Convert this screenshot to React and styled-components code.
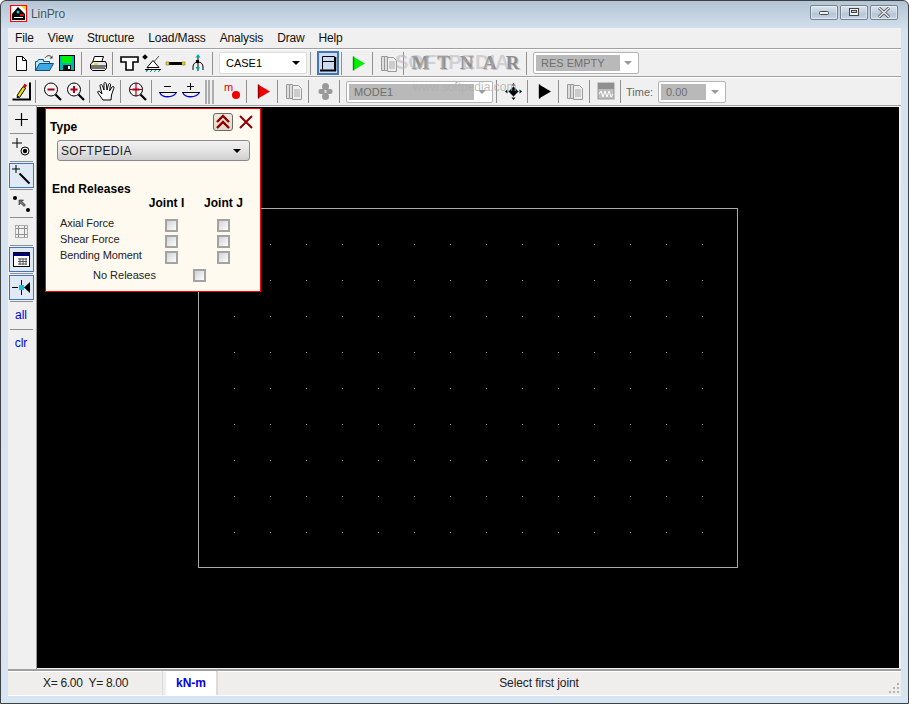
import React from 'react';
import styled, { createGlobalStyle } from 'styled-components';

const Global = createGlobalStyle`
  html, body { margin: 0; padding: 0; background: #fff; }
  body { font-family: "Liberation Sans", Arial, sans-serif; font-size: 12px; color: #000; }
  * { box-sizing: border-box; }
`;

const Window = styled.div`
  position: relative;
  width: 909px;
  height: 704px;
  display: flex;
  flex-direction: column;
  padding: 0 7px 7px;
  border: 1px solid #3d4247;
  border-radius: 6px 6px 0 0;
  background: linear-gradient(180deg, #b3c4d4 0, #d5e2ef 30px, #d7e5f2 100%);
`;

const TitleBar = styled.div`
  height: 27px;
  flex: none;
  display: flex;
  align-items: center;
  padding: 0 2px 2px 2px;
`;

const Title = styled.span`
  margin-left: 4px;
  font-size: 12px;
  letter-spacing: -0.1px;
  color: #4a545e;
  text-shadow: 0 0 4px #e8f0f8;
`;

const Controls = styled.div`
  margin-left: auto;
  margin-right: 1px;
  margin-bottom: 3px;
  display: flex;
  gap: 2px;
`;

const WinButton = styled.div`
  width: 28px;
  height: 15px;
  border: 1px solid #75838f;
  border-radius: 2px;
  display: flex;
  align-items: center;
  justify-content: center;
  background: linear-gradient(180deg, #d8e2ec 0, #c2d0de 50%, #b3c4d4 52%, #c6d5e4 100%);
  box-shadow: inset 0 0 0 1px rgba(255, 255, 255, 0.45);
`;

const Client = styled.div`
  flex: 1;
  min-height: 0;
  display: flex;
  flex-direction: column;
  background: #f0f0f0;
`;

const MenuBar = styled.div`
  height: 21px;
  flex: none;
  display: flex;
  align-items: center;
  gap: 14px;
  padding-left: 7px;
  border-bottom: 1px solid #a0a0a0;
`;

const MenuItem = styled.span`
  font-size: 12px;
  letter-spacing: -0.15px;
  color: #111;
`;

const ToolBar = styled.div`
  height: ${(p) => p.$h}px;
  flex: none;
  display: flex;
  align-items: center;
  padding-left: 2px;
  background: #f0f0f0;
  border-top: 1px solid #fff;
  border-bottom: 1px solid #a0a0a0;
`;

const Tool = styled.div`
  width: 23px;
  height: 24px;
  flex: none;
  display: flex;
  align-items: center;
  justify-content: center;
`;

const ActiveTool = styled.div`
  width: 22px;
  height: 24px;
  flex: none;
  margin-left: 1px;
  display: flex;
  align-items: center;
  justify-content: center;
  background: #cddcf0;
  border: 1px solid #3f76c4;
  box-shadow: inset 0 0 0 1px #3f76c4;
`;

const Sep = styled.div`
  width: 1px;
  height: 23px;
  flex: none;
  margin: 0 5px 0 2px;
  background: #8f8f8f;
`;

const Bar = styled.div`
  width: 2px;
  height: 24px;
  flex: none;
  margin-left: ${(p) => p.$left}px;
  margin-right: ${(p) => p.$right || 0}px;
  background: #adadad;
`;

const LetterTool = styled(Tool)`
  font-family: "Liberation Serif", serif;
  font-weight: 700;
  font-size: 19px;
  color: #8f8f8f;
  text-shadow: 1px 1px 0 #c4c4c4;
`;

const Combo = styled.div`
  width: ${(p) => p.$w}px;
  height: 22px;
  flex: none;
  margin-left: 1px;
  margin-right: 1px;
  display: flex;
  align-items: center;
  padding: 0 3px 0 2px;
  background: #fff;
  border: 1px solid ${(p) => (p.$off ? '#b4b4b4' : '#dcdcdc')};
  border-radius: 2px;
`;

const ComboText = styled.span`
  flex: ${(p) => (p.$w ? 'none' : 1)};
  width: ${(p) => (p.$w ? `${p.$w}px` : 'auto')};
  height: 16px;
  line-height: 16px;
  padding-left: ${(p) => (p.$off ? 5 : 4)}px;
  font-size: 11px;
  color: ${(p) => (p.$off ? '#6f6f6f' : '#000')};
  background: ${(p) => (p.$off ? '#b9b9b9' : 'transparent')};
`;

const Arrow = styled.i`
  width: 0;
  height: 0;
  margin-left: auto;
  margin-right: 3px;
  border-style: solid;
  border-width: 4px 4px 0;
  border-color: ${(p) => (p.$off ? '#9a9a9a' : '#000')} transparent transparent;
`;

const TimeLabel = styled.span`
  flex: none;
  width: 31px;
  font-size: 11px;
  color: #666;
`;

const Body = styled.div`
  flex: 1;
  min-height: 0;
  display: flex;
`;

const SideBar = styled.div`
  width: 29px;
  flex: none;
  display: flex;
  flex-direction: column;
  align-items: center;
  padding: 1px 2px 0 0;
  border-right: 1px solid #9a9a9a;
`;

const SideTool = styled.div`
  width: 25px;
  height: 25px;
  flex: none;
  display: flex;
  align-items: center;
  justify-content: center;
  border: 1px solid ${(p) => (p.$on ? '#3f76c4' : 'transparent')};
  ${(p) =>
    p.$on &&
    `background-color:#e0eaf7;
     background-image:radial-gradient(#b9cee9 0.6px, transparent 0.7px);
     background-size:2px 2px;`}
`;

const SideText = styled(SideTool)`
  padding-bottom: 2px;
  font-size: 12px;
  color: #0000e0;
`;

const SideSep = styled.div`
  width: 23px;
  height: 1px;
  flex: none;
  margin: 1px 0;
  background: #8f8f8f;
`;

const Canvas = styled.div`
  position: relative;
  flex: 1;
  min-width: 0;
  background: #000;
  margin: 1px 2px 1px 0;
`;

const Panel = styled.div`
  position: absolute;
  left: 8px;
  top: 1px;
  width: 216px;
  height: 184px;
  padding: 4px 0 0 4px;
  background: #fffaf0;
  border: 1px solid #f00;
`;

const PanelHead = styled.div`
  display: flex;
  align-items: center;
  height: 18px;
`;

const BoldLabel = styled.div`
  font-size: 12px;
  font-weight: 700;
  letter-spacing: 0.05px;
  line-height: 14px;
  margin-left: ${(p) => p.$left || 0}px;
  margin-top: ${(p) => p.$top || 0}px;
`;

const TypeLabel = styled(BoldLabel)`
  align-self: flex-end;
  margin-bottom: -3px;
`;

const Collapse = styled.div`
  width: 20px;
  height: 18px;
  margin-left: auto;
  display: flex;
  align-items: center;
  justify-content: center;
  background: linear-gradient(180deg, #f0e8dc, #e2d8c8);
  border: 1px solid #6a6a6a;
  border-radius: 3px;
`;

const CloseIcon = styled.div`
  width: 16px;
  height: 16px;
  margin: 0 6px 0 5px;
`;

const TypeSelect = styled.div`
  width: 193px;
  height: 21px;
  margin: 9px 0 0 7px;
  padding: 0 5px 0 3px;
  display: flex;
  align-items: center;
  font-size: 12px;
  letter-spacing: 0.3px;
  color: #222;
  border: 1px solid #8a8a8a;
  border-radius: 3px;
  background: linear-gradient(180deg, #f2f2f2 0, #e4e4e4 50%, #cfcfcf 100%);
`;

const JointHead = styled.div`
  display: grid;
  grid-template-columns: 57px 57px;
  justify-items: center;
  margin: 0 0 7px 88px;
  height: 14px;
`;

const ReleaseRow = styled.label`
  display: grid;
  grid-template-columns: 105px 13px 39px 13px;
  height: 16px;
  align-items: center;
  padding-left: 10px;
  font-size: 11px;
  letter-spacing: -0.1px;
  color: #222;
`;

const RowText = styled.span`
  margin-bottom: 5px;
`;

const NoRelease = styled.label`
  display: grid;
  grid-template-columns: 100px 13px;
  height: 16px;
  margin-top: 2px;
  align-items: center;
  padding-left: 43px;
  font-size: 11px;
  color: #222;
`;

const Check = styled.input.attrs({ type: 'checkbox' })`
  appearance: none;
  width: 13px;
  height: 13px;
  margin: 0;
  border: 2px solid #a3a3a3;
  background: linear-gradient(135deg, #cfd2d6, #fff);
`;

const StatusBar = styled.div`
  height: 27px;
  flex: none;
  display: flex;
  background: #f0eded;
  border-top: 2px solid #a0a0a0;
  border-bottom: 1px solid #fff;
  box-shadow: inset 0 1px 0 #fff;
`;

const Coords = styled.div`
  width: 155px;
  padding-left: 35px;
  display: flex;
  align-items: center;
  white-space: pre;
  font-size: 12px;
  letter-spacing: -0.3px;
  border-right: 1px solid #dcdcdc;
  color: #222;
`;

const Units = styled.div`
  width: 52px;
  margin-left: 3px;
  display: flex;
  align-items: center;
  justify-content: center;
  font-weight: 700;
  font-size: 12px;
  color: #0000e6;
  background: #fff;
  border-right: 2px solid #dcdcdc;
`;

const Message = styled.div`
  flex: 1;
  display: flex;
  align-items: center;
  justify-content: center;
  font-size: 12px;
  letter-spacing: -0.1px;
  color: #222;
  padding-right: 28px;
`;

const GripBox = styled.div`
  display: flex;
  align-items: flex-end;
  padding: 0 1px 1px 0;
`;

const Watermark = styled.div`
  position: absolute;
  left: ${(p) => p.$x}px;
  top: ${(p) => p.$y}px;
  font-size: ${(p) => p.$size}px;
  font-weight: ${(p) => p.$weight || 400};
  color: rgba(176, 176, 176, ${(p) => p.$alpha});
  white-space: nowrap;
  pointer-events: none;
`;

const Svg = ({ w = 21, h = 21, children }) => (
  <svg width={w} height={h} viewBox={`0 0 ${w} ${h}`} fill="none">
    {children}
  </svg>
);

const NewIcon = () => (
  <Svg>
    <path d="M5.5 3.5h6l4 4v10h-10z" fill="#fff" stroke="#000" />
    <path d="M11.5 3.5v4h4" stroke="#000" />
  </Svg>
);

const OpenIcon = () => (
  <Svg>
    <path d="M1.5 17.5v-9h2l1-2h5v2h6v9z" fill="#bfe6f6" stroke="#0a5a8a" />
    <path d="M1.5 17.5l4-7h14l-4 7z" fill="#3fa8e0" stroke="#0a4f86" />
    <path d="M11 5c1.5-2.5 4.5-3 6-1.5" stroke="#333" />
    <path d="M15.5 5.5h3v-3z" fill="#333" />
  </Svg>
);

const SaveIcon = () => (
  <Svg>
    <rect x="2.5" y="2.5" width="15" height="15" fill="#00b4b4" stroke="#000" />
    <rect x="5" y="3" width="10" height="7" fill="#00f000" />
    <rect x="6" y="12" width="8" height="5" fill="#111" />
    <rect x="11" y="13" width="2" height="3" fill="#fff" />
  </Svg>
);

const PrintIcon = () => (
  <Svg>
    <path d="M6.5 3.5h9l-2 6h-9z" fill="#fff" stroke="#000" />
    <path d="M2.5 11l3-2.5h12l1 2.5v4l-2 2.5h-12l-2-2z" fill="#e8e8e8" stroke="#000" />
    <path d="M3 13h15M3 15h14" stroke="#000" />
    <rect x="6" y="10" width="4" height="2" fill="#e8d840" />
  </Svg>
);

const TeeIcon = () => (
  <Svg>
    <path d="M2 4h17v5h-5v8H7V9H2z" fill="#fff" stroke="#000" strokeWidth="1.6" />
  </Svg>
);

const SupportIcon = () => (
  <Svg>
    <rect x="1" y="2" width="4" height="4" fill="#000" transform="rotate(45 3 4)" />
    <path d="M4 18L17 3" stroke="#555" />
    <path d="M11 7.5l-6 7h12z" fill="#fff" stroke="#000" />
    <path d="M3 16.5h16" stroke="#000" />
    <path d="M4 19l2-2M8 19l2-2M12 19l2-2M16 19l2-2" stroke="#00a0a0" />
  </Svg>
);

const LineIcon = () => (
  <Svg>
    <rect x="3" y="9" width="15" height="3" fill="#000" />
    <rect x="1" y="9" width="3" height="3" fill="#f0e000" stroke="#555" strokeWidth="0.5" />
    <rect x="17" y="9" width="3" height="3" fill="#f0e000" stroke="#555" strokeWidth="0.5" />
  </Svg>
);

const ForkIcon = () => (
  <Svg>
    <path d="M10 3v15" stroke="#000" />
    <path d="M5 17v-3c0-3 2-5 5-5s5 2 5 5v3" stroke="#000" />
    <path d="M10 1l2.5 3.5h-5z" fill="#00a8a8" />
    <path d="M7.5 14l2.5 4 2-4z" fill="#00a8a8" />
    <rect x="8" y="7" width="3" height="3" fill="#000" />
  </Svg>
);

const FrameIcon = () => (
  <Svg w={19} h={19}>
    <path d="M3.500 2.500h12v13" stroke="#000" />
    <path d="M3.500 2.500v13M3.500 7.500h12" stroke="#000" />
    <path d="M1 16.500h16" stroke="#000" strokeWidth="2" />
    <path d="M16.500 3v14" stroke="#000" strokeWidth="1.500" />
  </Svg>
);

const Flag = ({ color, edge }) => (
  <Svg>
    <path d="M5 3.500l12 7-12 7z" fill={color} />
    <path d="M5.500 3.500v14" stroke={edge} strokeWidth="1.400" />
  </Svg>
);

const PencilIcon = () => (
  <Svg>
    <path d="M19 1.500v17H1.500" stroke="#000" strokeWidth="2" />
    <path d="M2 16l10-13 4 3L6 18z" fill="#fff" />
    <path d="M6 14.500l6-9 2.500 2-6 9z" fill="#f0e000" stroke="#000" />
    <path d="M12 5l1.500-2.500 2.500 2-1.500 2.500z" fill="#e00000" />
    <path d="M6 14.500l-.5 3 2.800-1z" fill="#000" />
  </Svg>
);

const Glass = ({ sign }) => (
  <Svg>
    <circle cx="9" cy="8.500" r="6.500" fill="#f4f4f4" stroke="#000" />
    <path d="M13.500 13.500l5.500 5.500" stroke="#000" strokeWidth="2.200" />
    <path d="M5.500 8.500h7" stroke="#a80018" strokeWidth="2" />
    {sign === 'plus' && <path d="M9 5v7" stroke="#a80018" strokeWidth="2" />}
    {sign === 'cross' && <path d="M9 2v13M2.500 8.500h13" stroke="#a80018" strokeWidth="1.200" />}
  </Svg>
);

const HandIcon = () => (
  <Svg>
    <path
      d="M7 19l-5-7c-1-2 1-2.500 2-1l2 2L4 5c0-2 2-2 2.500 0L8 9 8 3c0-2 2-2 2.300 0L11 9l1.500-5.500c.5-1.500 2.500-1 2 .5L13.500 10l2.500-4c1-1 2.500-.5 1.800 1.200L15.500 14 15 19z"
      fill="#fff"
      stroke="#000"
    />
  </Svg>
);

const BeamIcon = ({ plus }) => (
  <Svg>
    <path d="M6 5.500h7" stroke="#000" />
    {plus && <path d="M9.500 2v7" stroke="#000" />}
    <path d="M1 11.500h18" stroke="#000" />
    <path d="M2 12c2 5 13 5 16 0" stroke="#0000e0" strokeWidth="1.300" />
  </Svg>
);

const MassIcon = () => (
  <Svg>
    <text x="2" y="10" fontFamily="Liberation Sans" fontSize="11" fill="#e00000">m</text>
    <circle cx="14" cy="14" r="4" fill="#f00000" />
  </Svg>
);

const PagesIcon = () => (
  <Svg>
    <path d="M2.500 3.500h3v14h-3zM5.500 3.500h3v14h-3z" fill="#ddd" stroke="#999" />
    <path d="M8.500 4.500h6l3 3v11h-9z" fill="#eee" stroke="#999" />
    <path d="M10 9h6M10 11h6M10 13h6M10 15h6" stroke="#aaa" />
  </Svg>
);

const FigureIcon = () => (
  <Svg>
    <circle cx="10.500" cy="5.500" r="3.500" fill="#999" />
    <circle cx="10.500" cy="15.500" r="3.500" fill="#999" />
    <rect x="3.500" y="8" width="14" height="5" rx="2" fill="#999" />
    <rect x="9.500" y="9" width="2" height="3" fill="#ddd" />
  </Svg>
);

const MoveIcon = () => (
  <Svg>
    <path d="M10.500 5.500l5 5-5 5-5-5z" fill="#000" />
    <path d="M10.500 2l2 2.500h-4zM10.500 19l2-2.500h-4zM2 10.500l2.500 2v-4zM19 10.500l-2.500 2v-4z" fill="#000" />
    <path d="M10.500 4v2M10.500 15v2M4 10.500h2M15 10.500h2" stroke="#19c4c4" />
  </Svg>
);

const WaveIcon = () => (
  <Svg>
    <rect x="2" y="2" width="16" height="16" fill="#bdbdbd" stroke="#9a9a9a" />
    <rect x="2" y="2" width="16" height="6" fill="#8f8f8f" />
    <path d="M3 13l2-3 2 6 2-6 2 6 2-6 2 6 2-3" stroke="#fff" />
  </Svg>
);

const PlusIcon = () => (
  <Svg>
    <path d="M10.500 4v13M4 10.500h13" stroke="#000" strokeWidth="1.200" />
  </Svg>
);

const PointIcon = () => (
  <Svg>
    <path d="M6 1v10M1 6h10" stroke="#000" />
    <circle cx="14" cy="14" r="4" fill="#fff" stroke="#000" />
    <circle cx="14" cy="14" r="2.200" fill="#000" />
  </Svg>
);

const DrawLineIcon = () => (
  <Svg>
    <path d="M5 0v8M1 4h8" stroke="#000" />
    <path d="M8.500 8.500l10 10" stroke="#000" strokeWidth="2" />
  </Svg>
);

const ArrowsIcon = () => (
  <Svg>
    <circle cx="4" cy="5" r="2" fill="#000" />
    <circle cx="17" cy="17" r="2" fill="#000" />
    <path d="M8 7h4.500l-1.500 1.500 3.500 3.500-1.500 1.500-3.500-3.500L8 12z" fill="#777" stroke="#000" strokeWidth="0.500" />
  </Svg>
);

const GridIcon = () => (
  <Svg>
    <path d="M7.500 4v13M13.500 4v13M4 7.500h13M4 13.500h13" stroke="#8f8f8f" />
    <path d="M4.500 4v13M16.500 4v13M4 4.500h13M4 16.500h13" stroke="#a8a8a8" />
  </Svg>
);

const CalendarIcon = () => (
  <Svg>
    <rect x="2.500" y="3.500" width="16" height="14" fill="#fff" stroke="#000" />
    <rect x="3" y="4" width="15" height="3" fill="#00007a" />
    <path d="M7 10h9M7 12.500h9M7 15h9M9 9v7M12 9v7M15 9v7" stroke="#555" />
  </Svg>
);

const SnapIcon = () => (
  <Svg>
    <path d="M1 10.500h6M10.500 3v5M10.500 13v5" stroke="#000" />
    <rect x="8" y="8" width="5" height="5" fill="#19c4d8" />
    <path d="M19 5v11l-6-5.500z" fill="#000" />
  </Svg>
);

const Chevrons = () => (
  <Svg w={16} h={16}>
    <path d="M2 8l6-6 6 6M2 14l6-6 6 6" stroke="#8a0000" strokeWidth="2.400" />
  </Svg>
);

const CanvasDrawing = () => {
  const dots = [];
  for (let y = 137; y <= 425; y += 36) {
    for (let x = 197; x <= 665; x += 36) {
      dots.push(<rect key={`${x}-${y}`} x={x} y={y} width="1" height="1" fill="#b0b0b0" />);
    }
  }
  return (
    <svg width="862" height="561" shapeRendering="crispEdges">
      <rect x="161.500" y="101.500" width="539" height="359" stroke="#a8a8a8" fill="none" />
      {dots}
    </svg>
  );
};

const menus = ['File', 'View', 'Structure', 'Load/Mass', 'Analysis', 'Draw', 'Help'];
const releases = ['Axial Force', 'Shear Force', 'Bending Moment'];

const App = () => (
  <Window>
    <Global />
    <TitleBar>
      <svg width="17" height="17" viewBox="0 0 17 17">
        <rect x="0.500" y="0.500" width="16" height="16" fill="#fff" stroke="#f00" />
        <path d="M11 1h5v5z" fill="#f0e000" />
        <path d="M8 2l7 7v6H2V9z" fill="#000" />
        <circle cx="8" cy="7" r="1.500" fill="#19c4d8" />
        <rect x="10" y="9" width="4" height="2" fill="#e00000" />
        <rect x="4" y="12" width="9" height="1" fill="#fff" />
      </svg>
      <Title>LinPro</Title>
      <Controls>
        <WinButton>
          <svg width="12" height="7"><rect x="1.500" y="2.500" width="9" height="3" rx="1" fill="#eef2f6" stroke="#444" /></svg>
        </WinButton>
        <WinButton>
          <svg width="12" height="10"><rect x="1.500" y="1.500" width="9" height="7" fill="#eef2f6" stroke="#444" /><rect x="3.500" y="3.500" width="5" height="2" fill="#c2d0de" stroke="#444" /></svg>
        </WinButton>
        <WinButton>
          <svg width="14" height="11"><path d="M2 1l10 9M12 1L2 10" stroke="#444" strokeWidth="3" /><path d="M2 1l10 9M12 1L2 10" stroke="#eef2f6" strokeWidth="1.500" /></svg>
        </WinButton>
      </Controls>
    </TitleBar>
    <Client>
      <MenuBar>
        {menus.map((m) => <MenuItem key={m}>{m}</MenuItem>)}
      </MenuBar>
      <ToolBar $h={28}>
        <Tool><NewIcon /></Tool>
        <Tool><OpenIcon /></Tool>
        <Tool><SaveIcon /></Tool>
        <Sep />
        <Tool><PrintIcon /></Tool>
        <Sep />
        <Tool><TeeIcon /></Tool>
        <Tool><SupportIcon /></Tool>
        <Tool><LineIcon /></Tool>
        <Tool><ForkIcon /></Tool>
        <Sep />
        <Combo $w={88}>
          <ComboText>CASE1</ComboText>
          <Arrow />
        </Combo>
        <Sep />
        <ActiveTool><FrameIcon /></ActiveTool>
        <Sep />
        <Tool><Flag color="#00f000" edge="#009000" /></Tool>
        <Sep />
        <Tool><PagesIcon /></Tool>
        <Sep />
        {['M', 'T', 'N', 'A', 'R'].map((l) => <LetterTool key={l}>{l}</LetterTool>)}
        <Sep />
        <Combo $w={106} $off>
          <ComboText $off $w={84}>RES EMPTY</ComboText>
          <Arrow $off />
        </Combo>
      </ToolBar>
      <ToolBar $h={29}>
        <Tool><PencilIcon /></Tool>
        <Sep />
        <Tool><Glass sign="minus" /></Tool>
        <Tool><Glass sign="plus" /></Tool>
        <Sep />
        <Tool><HandIcon /></Tool>
        <Sep />
        <Tool><Glass sign="cross" /></Tool>
        <Sep />
        <Tool><BeamIcon /></Tool>
        <Tool><BeamIcon plus /></Tool>
        <Bar $left={2} />
        <Bar $left={1} />
        <Bar $left={2} $right={7} />
        <Tool><MassIcon /></Tool>
        <Sep />
        <Tool><Flag color="#f00000" edge="#900000" /></Tool>
        <Sep />
        <Tool><PagesIcon /></Tool>
        <Sep />
        <Tool><FigureIcon /></Tool>
        <Sep />
        <Combo $w={147} $off>
          <ComboText $off $w={125}>MODE1</ComboText>
          <Arrow $off />
        </Combo>
        <Sep />
        <Tool><MoveIcon /></Tool>
        <Sep />
        <Tool><Flag color="#000" edge="#000" /></Tool>
        <Sep />
        <Tool><PagesIcon /></Tool>
        <Sep />
        <Tool><WaveIcon /></Tool>
        <Sep />
        <TimeLabel>Time:</TimeLabel>
        <Combo $w={68} $off>
          <ComboText $off $w={45}>0.00</ComboText>
          <Arrow $off />
        </Combo>
      </ToolBar>
      <Body>
        <SideBar>
          <SideTool><PlusIcon /></SideTool>
          <SideSep />
          <SideTool><PointIcon /></SideTool>
          <SideSep />
          <SideTool $on><DrawLineIcon /></SideTool>
          <SideSep />
          <SideTool><ArrowsIcon /></SideTool>
          <SideSep />
          <SideTool><GridIcon /></SideTool>
          <SideSep />
          <SideTool $on><CalendarIcon /></SideTool>
          <SideSep />
          <SideTool $on><SnapIcon /></SideTool>
          <SideSep />
          <SideText>all</SideText>
          <SideSep />
          <SideText>clr</SideText>
        </SideBar>
        <Canvas>
          <CanvasDrawing />
          <Panel>
            <PanelHead>
              <TypeLabel>Type</TypeLabel>
              <Collapse><Chevrons /></Collapse>
              <CloseIcon>
                <svg width="16" height="16"><path d="M2 2l12 12M14 2L2 14" stroke="#8a0000" strokeWidth="2" /></svg>
              </CloseIcon>
            </PanelHead>
            <TypeSelect>
              SOFTPEDIA
              <Arrow />
            </TypeSelect>
            <BoldLabel $left={2} $top={21}>End Releases</BoldLabel>
            <JointHead>
              <BoldLabel>Joint I</BoldLabel>
              <BoldLabel>Joint J</BoldLabel>
            </JointHead>
            {releases.map((r) => (
              <ReleaseRow key={r}>
                <RowText>{r}</RowText>
                <Check />
                <span />
                <Check />
              </ReleaseRow>
            ))}
            <NoRelease>
              <span>No Releases</span>
              <Check />
            </NoRelease>
          </Panel>
        </Canvas>
      </Body>
      <StatusBar>
        <Coords>{'X= 6.00  Y= 8.00'}</Coords>
        <Units>kN-m</Units>
        <Message>Select first joint</Message>
        <GripBox>
          <svg width="12" height="12" shapeRendering="crispEdges">
            {[[9, 1], [9, 5], [5, 5], [9, 9], [5, 9], [1, 9]].map(([x, y]) => (
              <rect key={`${x}${y}`} x={x} y={y} width="2" height="2" fill="#b5b5b5" />
            ))}
          </svg>
        </GripBox>
      </StatusBar>
    </Client>
    <Watermark $x={394} $y={50} $size={20} $weight={700} $alpha={0.5}>SOFTPEDIA</Watermark>
    <Watermark $x={412} $y={79} $size={12} $alpha={0.85}>www.softpedia.com</Watermark>
  </Window>
);

export default App;
